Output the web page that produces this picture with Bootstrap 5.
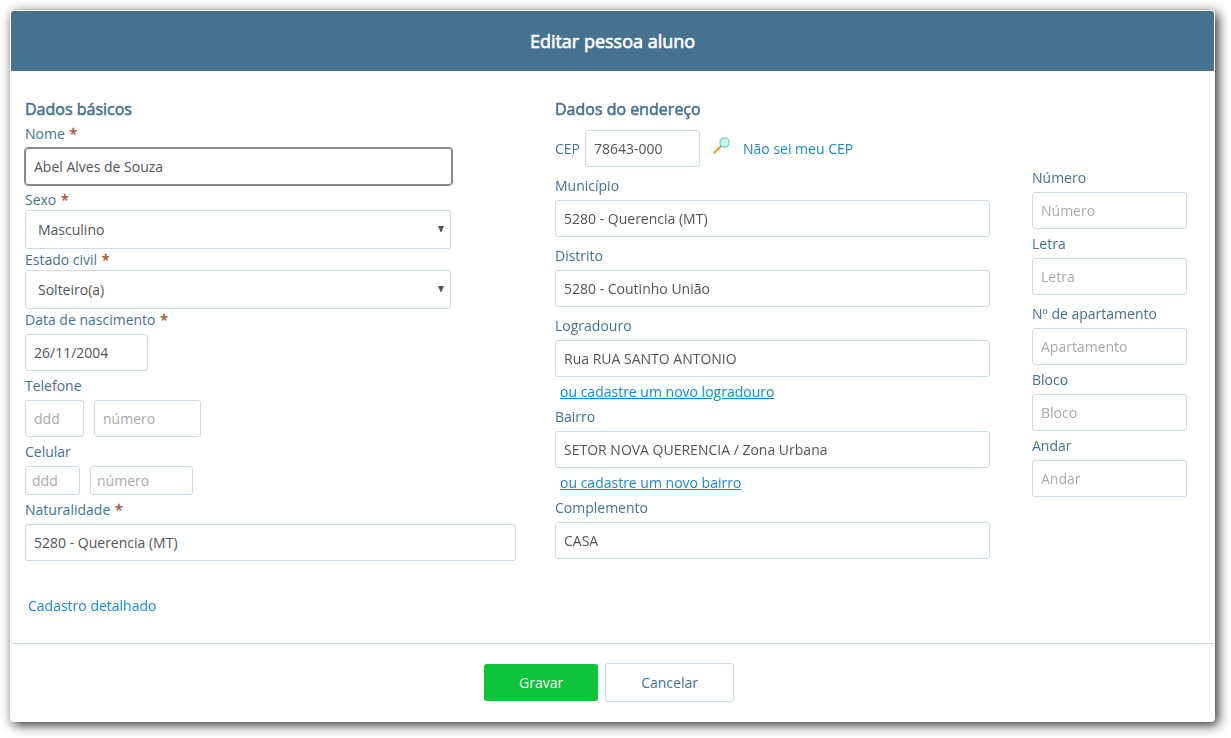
<!DOCTYPE html>
<html lang="pt-BR">
<head>
<meta charset="utf-8">
<meta name="viewport" content="width=device-width, initial-scale=1">
<title>Editar pessoa aluno</title>
<link href="https://cdn.jsdelivr.net/npm/bootstrap@5.3.0/dist/css/bootstrap.min.css" rel="stylesheet">
<style>
  body { font-family: "Open Sans", sans-serif; font-size: 14px; line-height: 20px; color: #47728f; background: #fff; padding: 10px 16px 16px 10px; }
  .dialog-box { padding: 1px; background: #fff; border-radius: 4px; box-shadow: 3px 3px 12px rgba(0,0,0,.85); }
  .dialog-title { background: #47728f; color: #fff; height: 60px; border-radius: 3px 3px 0 0; font-size: 18px; padding-top: 1px; }
  .faux-strong { font-weight: 400; -webkit-text-stroke: .035em currentColor; }
  .dialog-fields { display: grid; grid-template-columns: 530fr 477fr 182fr; padding: 28px 0 27px 14px; }
  .section-title { font-size: 16px; line-height: 20px; margin: 0 0 5px; }
  .dialog-fields label { display: block; }
  .form-control, .form-select { font-size: 14px; line-height: 19px; color: #535659; border: 1px solid #ccdce6; border-radius: 3px; padding: 8px; height: 37px; }
  .form-control { margin: 4px 0 5px; }
  .form-control::placeholder { color: #aaa; opacity: 1; }
  .form-control:focus { box-shadow: none; border-color: #85898c; outline: 1px solid #85898c; color: #535659; }
  .form-select { height: 39px; margin-bottom: 1px; padding: 9px 24px 9px 12px; max-width: 426px;
    background-image: url("data:image/svg+xml,%3Csvg xmlns='http://www.w3.org/2000/svg' viewBox='0 0 6 6'%3E%3Cpath fill='%23535659' d='M0 0h6L3.4 6h-.8z'/%3E%3C/svg%3E");
    background-size: 6px 6px; background-position: right 6px top 15px; }
  .req { color: #a04a22; margin-left: 1px; -webkit-text-stroke: .02em currentColor; }
  .w-name { max-width: 427px; }
  .w-birth { max-width: 491px; }
  .w-date { width: 123px; }
  .w-ddd { width: 59px; }
  .w-phone { width: 107px; }
  .phone-line { gap: 10px; }
  .low .form-control { height: 29px; padding: 4px 6px; }
  .low .w-ddd { width: 55px; }
  .low .w-phone { width: 103px; }
  .cep-line { gap: 5px; margin: 11px 0 9px; }
  .cep-line .form-control { width: 115px; margin: 0; }
  .cep-icon { margin: 0 7px 6px 8px; }
  .w-address { max-width: 435px; }
  .w-side { max-width: 155px; }
  .roomy { margin-bottom: 9px; }
  a { color: #1889cf; }
  .new-entry { margin: 0 5px 5px; }
  .detail-link { display: inline-block; margin: 30px 3px 0; }
  .side-fields { padding-top: 69px; }
  .dialog-actions { border-top: 1px solid #ccdce6; padding: 19px 0; }
  .dialog-actions .btn { font-size: 14px; line-height: 19px; border-radius: 3px; margin-right: 7px; padding: 9px 35px; }
  .btn-save { background: #0cc437; color: #fff; border: 0; }
  .btn-save:hover { background: #0aad30; color: #fff; }
  .btn-cancel { background: #fff; color: #47728f; border-color: #ccdce6; }
  @media (max-width: 900px) {
    .dialog-fields { grid-template-columns: 1fr; padding-right: 14px; row-gap: 20px; }
    .side-fields { padding-top: 0; }
  }
</style>
</head>
<body>
<form class="dialog-box">
  <h1 class="dialog-title faux-strong d-flex align-items-center justify-content-center m-0">Editar pessoa aluno</h1>
  <div class="dialog-fields">
    <section>
      <h2 class="section-title faux-strong">Dados básicos</h2>
      <label for="nome">Nome <span class="req">*</span></label>
      <input id="nome" class="form-control w-name" type="text" value="Abel Alves de Souza" autofocus>
      <label for="sexo">Sexo <span class="req">*</span></label>
      <select id="sexo" class="form-select"><option>Masculino</option><option>Feminino</option></select>
      <label for="civil">Estado civil <span class="req">*</span></label>
      <select id="civil" class="form-select"><option>Solteiro(a)</option><option>Casado(a)</option></select>
      <label for="nascimento">Data de nascimento <span class="req">*</span></label>
      <input id="nascimento" class="form-control w-date" type="text" value="26/11/2004">
      <label for="tel-ddd">Telefone</label>
      <div class="phone-line d-flex">
        <input id="tel-ddd" class="form-control w-ddd" type="text" placeholder="ddd">
        <input class="form-control w-phone" type="text" placeholder="número" aria-label="Número do telefone">
      </div>
      <label for="cel-ddd">Celular</label>
      <div class="phone-line low d-flex">
        <input id="cel-ddd" class="form-control w-ddd" type="text" placeholder="ddd">
        <input class="form-control w-phone" type="text" placeholder="número" aria-label="Número do celular">
      </div>
      <label for="naturalidade">Naturalidade <span class="req">*</span></label>
      <input id="naturalidade" class="form-control w-birth" type="text" value="5280 - Querencia (MT)">
      <a href="#" class="detail-link text-decoration-none">Cadastro detalhado</a>
    </section>
    <section>
      <h2 class="section-title faux-strong">Dados do endereço</h2>
      <div class="cep-line d-flex align-items-center">
        <label for="cep">CEP</label>
        <input id="cep" class="form-control" type="text" value="78643-000">
        <svg class="cep-icon" width="18" height="18" viewBox="0 0 18 18" aria-hidden="true">
          <path d="M1.500 15.500 7.500 9.500" stroke="#f2a23c" stroke-width="2.400" stroke-linecap="round"/>
          <path d="M7.500 9.500 8.500 8.500" stroke="#7f9aa8" stroke-width="2"/>
          <circle cx="11.500" cy="5.500" r="4.600" fill="#bffbe6" stroke="#7cc0cc" stroke-width="1.200"/>
        </svg>
        <a href="#" class="text-decoration-none">Não sei meu CEP</a>
      </div>
      <label for="municipio">Município</label>
      <input id="municipio" class="form-control w-address roomy" type="text" value="5280 - Querencia (MT)">
      <label for="distrito">Distrito</label>
      <input id="distrito" class="form-control w-address roomy" type="text" value="5280 - Coutinho União">
      <label for="logradouro">Logradouro</label>
      <input id="logradouro" class="form-control w-address" type="text" value="Rua RUA SANTO ANTONIO">
      <div class="new-entry"><a href="#">ou cadastre um novo logradouro</a></div>
      <label for="bairro">Bairro</label>
      <input id="bairro" class="form-control w-address" type="text" value="SETOR NOVA QUERENCIA / Zona Urbana">
      <div class="new-entry"><a href="#">ou cadastre um novo bairro</a></div>
      <label for="complemento">Complemento</label>
      <input id="complemento" class="form-control w-address" type="text" value="CASA">
    </section>
    <section class="side-fields">
      <label for="numero">Número</label>
      <input id="numero" class="form-control w-side" type="text" placeholder="Número">
      <label for="letra">Letra</label>
      <input id="letra" class="form-control w-side roomy" type="text" placeholder="Letra">
      <label for="apartamento">Nº de apartamento</label>
      <input id="apartamento" class="form-control w-side" type="text" placeholder="Apartamento">
      <label for="bloco">Bloco</label>
      <input id="bloco" class="form-control w-side" type="text" placeholder="Bloco">
      <label for="andar">Andar</label>
      <input id="andar" class="form-control w-side" type="text" placeholder="Andar">
    </section>
  </div>
  <div class="dialog-actions d-flex align-items-center justify-content-center">
    <button type="submit" class="btn btn-save">Gravar</button>
    <button type="button" class="btn btn-cancel">Cancelar</button>
  </div>
</form>
<script src="https://cdn.jsdelivr.net/npm/bootstrap@5.3.0/dist/js/bootstrap.bundle.min.js"></script>
</body>
</html>
